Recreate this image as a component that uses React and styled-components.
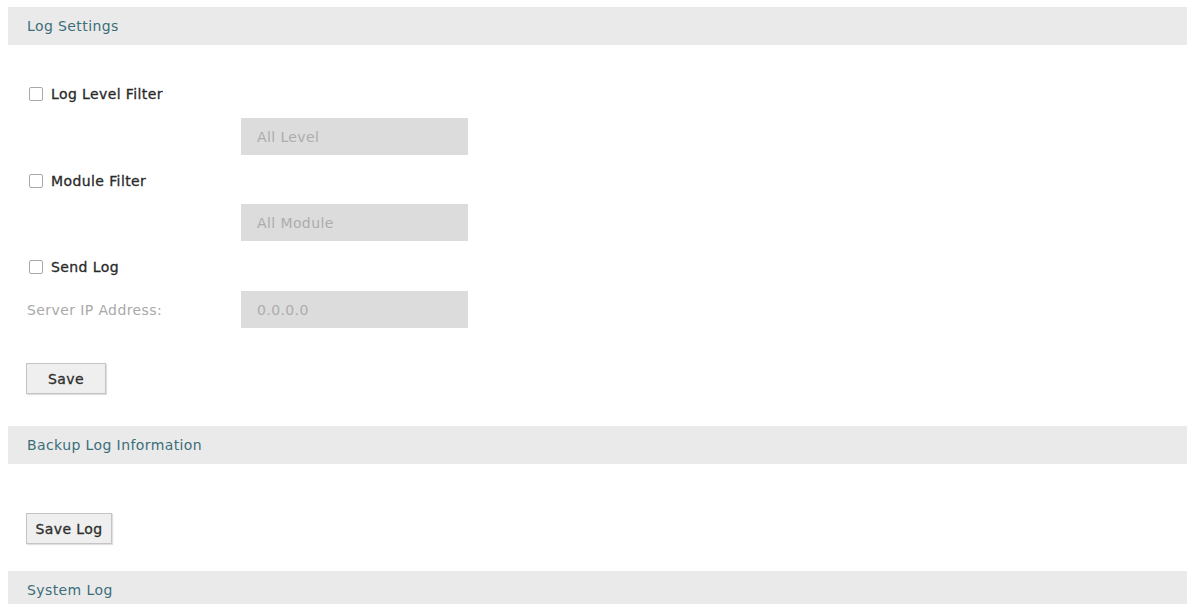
import React from 'react';
import styled, {createGlobalStyle} from 'styled-components';

const GlobalStyle = createGlobalStyle`
  body {
    margin: 7px 0 0 8px;
    background: #fff;
    font-family: "DejaVu Sans", Verdana, sans-serif;
    font-size: 14px;
    letter-spacing: 0.4px;
    color: #333;
  }
`;

const Page = styled.div`
  display: flex;
  flex-direction: column;
`;

const SectionHeader = styled.div`
  height: 38px;
  background: #ebeaea;
  display: flex;
  align-items: center;
  padding-left: 19px;
  margin-top: ${({top}) => top || 0}px;
  color: #3b6e79;
`;

const Row = styled.div`
  display: flex;
  align-items: center;
  height: ${({h}) => h || 24}px;
  margin-top: ${({top}) => top || 0}px;
  padding-left: ${({indent}) => indent || 0}px;
`;

const CheckLabel = styled.label`
  display: flex;
  align-items: center;
  gap: 8px;
  color: #2a2a2a;
  -webkit-text-stroke: 0.3px #2a2a2a;
`;

const Box = styled.span`
  width: 14px;
  height: 14px;
  border: 1px solid #a8a8a8;
  border-radius: 2px;
  background: #fff;
  box-sizing: border-box;
  display: inline-block;
`;

const FieldLabel = styled.div`
  width: 214px;
  color: #a9a9a9;
`;

const Field = styled.div`
  width: 227px;
  height: 37px;
  background: #dcdcdc;
  color: #acacac;
  display: flex;
  align-items: center;
  padding-left: 16px;
  box-sizing: border-box;
  margin-left: ${({offset}) => offset || 0}px;
`;

const Button = styled.button`
  font-family: inherit;
  font-size: 14px;
  letter-spacing: 0.4px;
  color: #2e2e2e;
  -webkit-text-stroke: 0.3px #2e2e2e;
  height: 31px;
  width: ${({w}) => w}px;
  background: #efefef;
  border: 1px solid #c4c4c4;
  box-shadow: 1px 1px 1px rgba(0, 0, 0, 0.12);
  padding: 0;
`;

const Check = ({children}) => (
  <CheckLabel>
    <Box/>
    {children}
  </CheckLabel>
);

export default function App() {
  return (
    <Page>
      <GlobalStyle/>
      <SectionHeader>Log Settings</SectionHeader>

      <Row top={37} indent={21}>
        <Check>Log Level Filter</Check>
      </Row>
      <Row top={12} h={37}>
        <Field offset={233}>All Level</Field>
      </Row>

      <Row top={14} indent={21}>
        <Check>Module Filter</Check>
      </Row>
      <Row top={11} h={37}>
        <Field offset={233}>All Module</Field>
      </Row>

      <Row top={14} indent={21}>
        <Check>Send Log</Check>
      </Row>
      <Row top={12} h={37} indent={19}>
        <FieldLabel>Server IP Address:</FieldLabel>
        <Field>0.0.0.0</Field>
      </Row>

      <Row top={35} h={31} indent={18}>
        <Button w={80}>Save</Button>
      </Row>

      <SectionHeader top={32}>Backup Log Information</SectionHeader>

      <Row top={49} h={31} indent={18}>
        <Button w={86}>Save Log</Button>
      </Row>

      <SectionHeader top={27}>System Log</SectionHeader>
    </Page>
  );
}
